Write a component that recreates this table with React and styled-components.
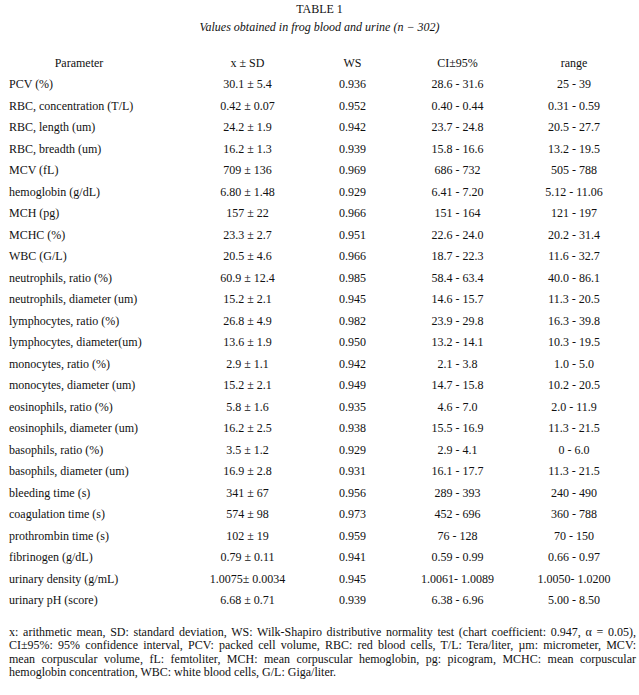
import React from "react";
import styled, { createGlobalStyle } from "styled-components";

const Global = createGlobalStyle`
  html, body { margin: 0; padding: 0; background: #fff; }
  body { font-family: "Liberation Serif", "Times New Roman", serif; color: #111; }
`;

const Page = styled.div`
  width: 639px;
  box-sizing: border-box;
  padding: 0 3px 0 9px;
  font-size: 12px;
`;

const Title = styled.div`
  text-align: center;
  line-height: 18px;
  margin-left: -6px;
`;

const Subtitle = styled(Title)`
  font-style: italic;
`;

const Table = styled.div`
  display: grid;
  grid-template-columns: 186px 105px 105px 105px 128px;
  grid-auto-rows: 21.5px;
  margin-top: 16.5px;
  align-items: center;
`;

const HeadCell = styled.div`
  text-align: center;
  height: 22.5px;
  line-height: 22.5px;
  padding-right: ${(p) => (p.$first ? "46px" : "0")};
`;

const Cell = styled.div`
  text-align: ${(p) => (p.$left ? "left" : "center")};
  white-space: nowrap;
  line-height: 21.5px;
`;

const Footnote = styled.div`
  margin-top: 14px;
  line-height: 13.5px;
`;

const FootLine = styled.div`
  text-align: ${(p) => (p.$last ? "left" : "justify")};
  text-align-last: ${(p) => (p.$last ? "left" : "justify")};
  white-space: nowrap;
`;

const rows = [
  ["PCV (%)", "30.1 ± 5.4", "0.936", "28.6 - 31.6", "25 - 39"],
  ["RBC, concentration (T/L)", "0.42 ± 0.07", "0.952", "0.40 - 0.44", "0.31 - 0.59"],
  ["RBC, length (um)", "24.2 ± 1.9", "0.942", "23.7 - 24.8", "20.5 - 27.7"],
  ["RBC, breadth (um)", "16.2 ± 1.3", "0.939", "15.8 - 16.6", "13.2 - 19.5"],
  ["MCV (fL)", "709 ± 136", "0.969", "686 - 732", "505 - 788"],
  ["hemoglobin (g/dL)", "6.80 ± 1.48", "0.929", "6.41 - 7.20", "5.12 - 11.06"],
  ["MCH (pg)", "157 ± 22", "0.966", "151 - 164", "121 - 197"],
  ["MCHC (%)", "23.3 ± 2.7", "0.951", "22.6 - 24.0", "20.2 - 31.4"],
  ["WBC (G/L)", "20.5 ± 4.6", "0.966", "18.7 - 22.3", "11.6 - 32.7"],
  ["neutrophils, ratio (%)", "60.9 ± 12.4", "0.985", "58.4 - 63.4", "40.0 - 86.1"],
  ["neutrophils, diameter (um)", "15.2 ± 2.1", "0.945", "14.6 - 15.7", "11.3 - 20.5"],
  ["lymphocytes, ratio (%)", "26.8 ± 4.9", "0.982", "23.9 - 29.8", "16.3 - 39.8"],
  ["lymphocytes, diameter(um)", "13.6 ± 1.9", "0.950", "13.2 - 14.1", "10.3 - 19.5"],
  ["monocytes, ratio (%)", "2.9 ± 1.1", "0.942", "2.1 - 3.8", "1.0 - 5.0"],
  ["monocytes, diameter (um)", "15.2 ± 2.1", "0.949", "14.7 - 15.8", "10.2 - 20.5"],
  ["eosinophils, ratio (%)", "5.8 ± 1.6", "0.935", "4.6 - 7.0", "2.0 - 11.9"],
  ["eosinophils, diameter (um)", "16.2 ± 2.5", "0.938", "15.5 - 16.9", "11.3 - 21.5"],
  ["basophils, ratio (%)", "3.5 ± 1.2", "0.929", "2.9 - 4.1", "0 - 6.0"],
  ["basophils, diameter (um)", "16.9 ± 2.8", "0.931", "16.1 - 17.7", "11.3 - 21.5"],
  ["bleeding time (s)", "341 ± 67", "0.956", "289 - 393", "240 - 490"],
  ["coagulation time (s)", "574 ± 98", "0.973", "452 - 696", "360 - 788"],
  ["prothrombin time (s)", "102 ± 19", "0.959", "76 - 128", "70 - 150"],
  ["fibrinogen (g/dL)", "0.79 ± 0.11", "0.941", "0.59 - 0.99", "0.66 - 0.97"],
  ["urinary density (g/mL)", "1.0075± 0.0034", "0.945", "1.0061- 1.0089", "1.0050- 1.0200"],
  ["urinary pH (score)", "6.68 ± 0.71", "0.939", "6.38 - 6.96", "5.00 - 8.50"],
];

const notes = [
  "x: arithmetic mean, SD: standard deviation, WS: Wilk-Shapiro distributive normality test (chart coefficient: 0.947, α = 0.05),",
  "CI±95%: 95% confidence interval, PCV: packed cell volume, RBC: red blood cells, T/L: Tera/liter, µm: micrometer, MCV:",
  "mean corpuscular volume, fL: femtoliter, MCH: mean corpuscular hemoglobin, pg: picogram, MCHC: mean corpuscular",
  "hemoglobin concentration, WBC: white blood cells, G/L: Giga/liter.",
];

export default function App() {
  return (
    <Page>
      <Global />
      <Title>TABLE 1</Title>
      <Subtitle>Values obtained in frog blood and urine (n − 302)</Subtitle>
      <Table>
        <HeadCell $first>Parameter</HeadCell>
        <HeadCell>x ± SD</HeadCell>
        <HeadCell>WS</HeadCell>
        <HeadCell>CI±95%</HeadCell>
        <HeadCell>range</HeadCell>
        {rows.map((r) =>
          r.map((c, i) => (
            <Cell key={r[0] + i} $left={i === 0}>
              {c}
            </Cell>
          ))
        )}
      </Table>
      <Footnote>
        {notes.map((n, i) => (
          <FootLine key={i} $last={i === notes.length - 1}>
            {n}
          </FootLine>
        ))}
      </Footnote>
    </Page>
  );
}
